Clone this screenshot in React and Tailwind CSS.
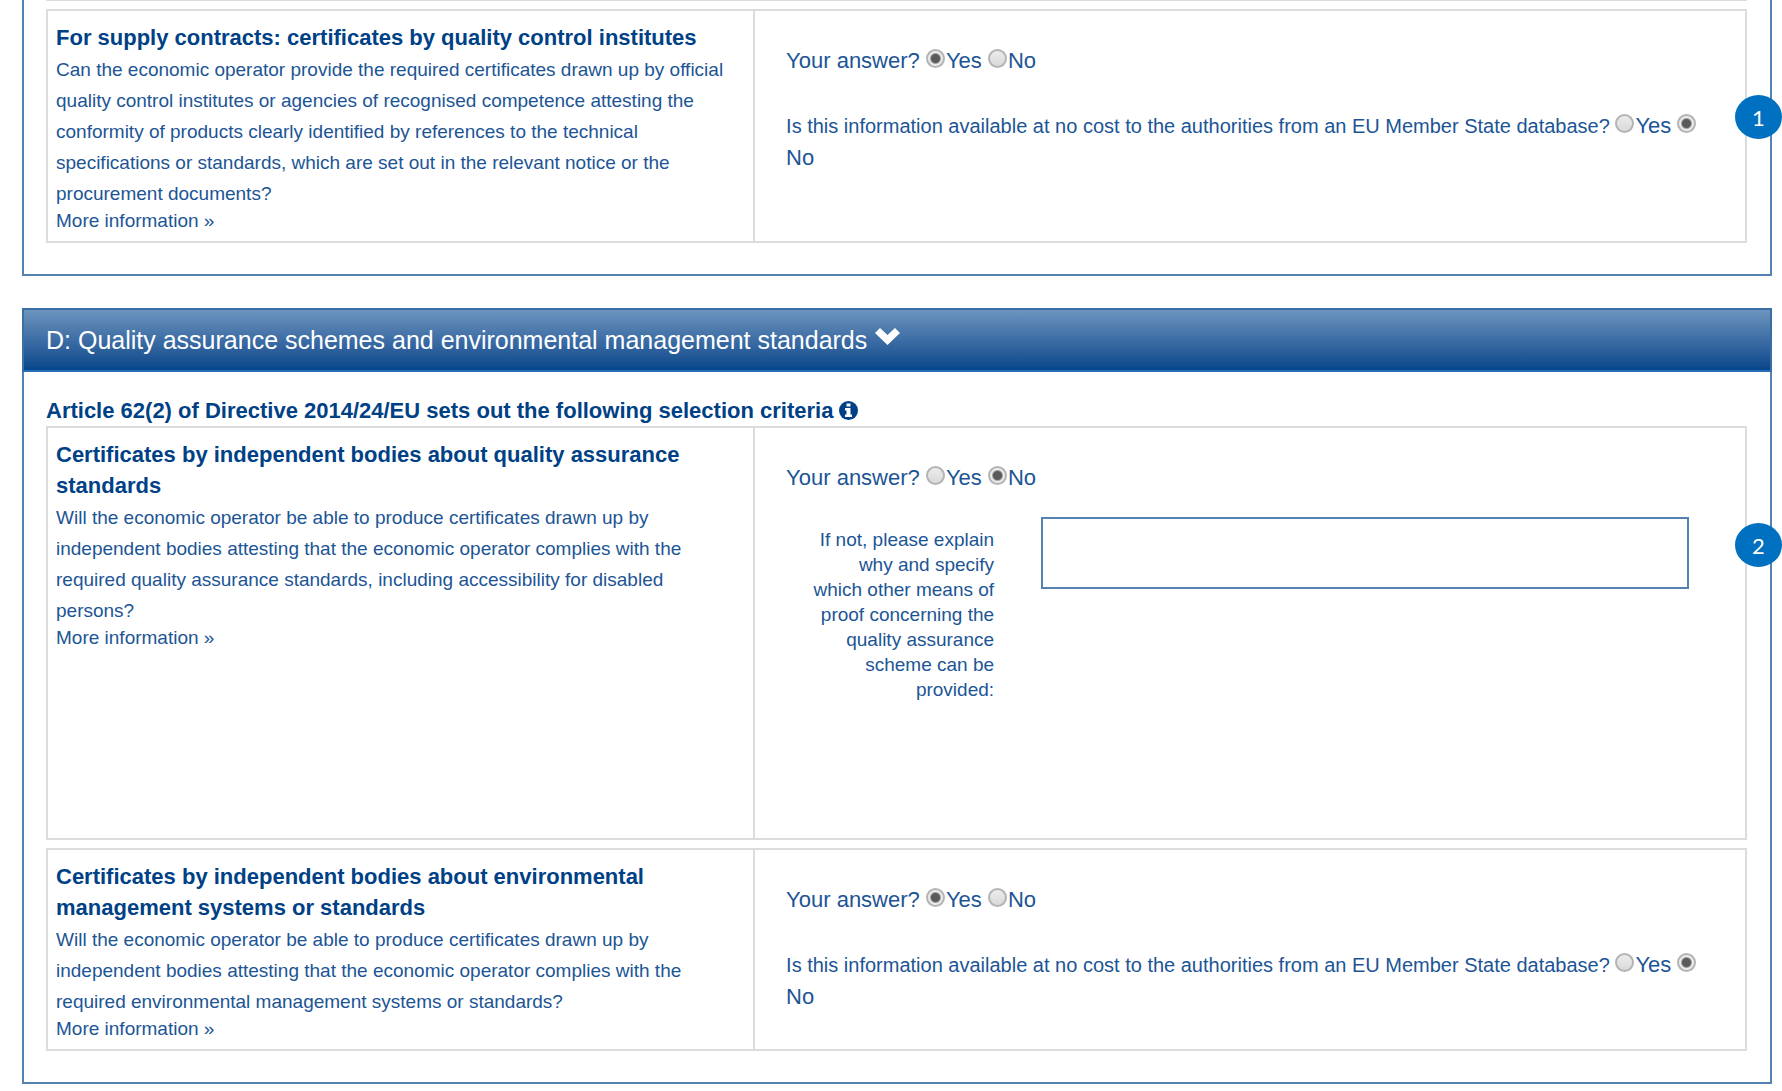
import React from "react";

function Radio({ name, label, checked }) {
  return (
    <label className="text-[22px]/[31px]">
      <input
        type="radio"
        name={name}
        value={label}
        defaultChecked={checked}
        className="mr-px inline-block size-[19px] appearance-none rounded-full border-2 border-[#b4b4b4] bg-linear-to-b from-[#ececec] to-[#d9d9d9] checked:bg-[radial-gradient(circle,#5a5a5a_0_4px,#ececec_6px)]"
      />
      {label}
    </label>
  );
}

function Question({ text, name, value, className }) {
  return (
    <fieldset className={className}>
      {text} <Radio name={name} label="Yes" checked={value === "Yes"} />{" "}
      <Radio name={name} label="No" checked={value === "No"} />
    </fieldset>
  );
}

function AnswerQuestion({ name, value }) {
  return <Question text="Your answer?" name={name} value={value} className="text-[22px]/[31px]" />;
}

function DatabaseQuestion({ name, value }) {
  return (
    <Question
      text="Is this information available at no cost to the authorities from an EU Member State database?"
      name={name}
      value={value}
      className="text-xl/[31px]"
    />
  );
}

function Badge({ children, className }) {
  return (
    <span
      className={
        "absolute -right-[37px] flex h-11 w-[47px] items-center justify-center rounded-[50%] bg-[#0070c0] font-[Lato,sans-serif] text-[22px] text-white " +
        className
      }
    >
      {children}
    </span>
  );
}

function Criterion({ title, text, children, className = "" }) {
  return (
    <section className={"relative grid grid-cols-12 border-2 border-[#dcdcdc] " + className}>
      <div className="col-span-5 border-r-2 border-[#dcdcdc] pt-[11px] pr-5 pb-2 pl-2">
        <h3 className="mb-px text-[22px]/[31px] font-bold text-[#004186]">{title}</h3>
        <p className="text-[19px]/[31px]">{text}</p>
        <a href="#more" className="block text-[19px]/6">
          More information »
        </a>
      </div>
      <div className="col-span-7 flex flex-col gap-[34px] pt-[34px] pr-8 pl-[31px]">{children}</div>
    </section>
  );
}

export default function App() {
  return (
    <main className="bg-white pr-[10px] pb-2 pl-[22px] font-['Liberation_Sans',Arial,sans-serif] text-[#1c5595]">
      <div className="border-2 border-t-0 border-[#5583b1] pr-[23px] pb-[31px] pl-[22px]">
        <div className="mb-2 h-px bg-[#dcdcdc]" />
        <Criterion
          title="For supply contracts: certificates by quality control institutes"
          text="Can the economic operator provide the required certificates drawn up by official quality control institutes or agencies of recognised competence attesting the conformity of products clearly identified by references to the technical specifications or standards, which are set out in the relevant notice or the procurement documents?"
        >
          <AnswerQuestion name="supply" value="Yes" />
          <DatabaseQuestion name="supply-db" value="No" />
          <Badge className="top-[84px]">1</Badge>
        </Criterion>
      </div>

      <div className="mt-8 border-2 border-[#5583b1] pb-[31px]">
        <h2 className="-mx-0.5 -mt-0.5 border-2 border-[#3a6fa5] border-b-[#2a6fb8] bg-linear-to-b from-[#6c94be] to-[#04468a] px-[22px] py-[15px] text-[25px]/[30px] text-white">
          <button type="button" className="flex items-center gap-2">
            D: Quality assurance schemes and environmental management standards
            <svg viewBox="0 0 25 17" className="mb-2 h-[17px] w-[25px]" fill="currentColor" aria-hidden="true">
              <path d="M0 5 5 0l7.500 7L20 0l5 5-12.500 12z" />
            </svg>
          </button>
        </h2>
        <div className="pt-[23px] pr-[23px] pl-[22px]">
          <h3 className="flex items-center gap-1.5 text-[22px]/[31px] font-bold text-[#004186]">
            Article 62(2) of Directive 2014/24/EU sets out the following selection criteria
            <svg viewBox="0 0 19 19" className="size-[19px]" aria-hidden="true">
              <circle cx="9.500" cy="9.500" r="9.500" fill="#004186" />
              <path d="M7.500 2.500h4v3h-4zM6 7h5.500v6.500H13V16H6v-2.500h1.500v-4H6z" fill="#fff" />
            </svg>
          </h3>
          <Criterion
            className="min-h-[414px]"
            title="Certificates by independent bodies about quality assurance standards"
            text="Will the economic operator be able to produce certificates drawn up by independent bodies attesting that the economic operator complies with the required quality assurance standards, including accessibility for disabled persons?"
          >
            <AnswerQuestion name="quality" value="No" />
            <div className="-mt-[10px] grid grid-cols-[208px_1fr] items-start gap-[47px] pr-6">
              <label htmlFor="explain" className="pt-[10px] pl-6 text-right text-[19px]/[25px]">
                If not, please explain why and specify which other means of proof concerning the quality assurance
                scheme can be provided:
              </label>
              <textarea id="explain" className="block h-[72px] w-full resize-none border-2 border-[#5583b1] bg-white p-2 text-lg" />
            </div>
            <Badge className="top-[95px]">2</Badge>
          </Criterion>
          <Criterion
            className="mt-2"
            title="Certificates by independent bodies about environmental management systems or standards"
            text="Will the economic operator be able to produce certificates drawn up by independent bodies attesting that the economic operator complies with the required environmental management systems or standards?"
          >
            <AnswerQuestion name="environment" value="Yes" />
            <DatabaseQuestion name="environment-db" value="No" />
          </Criterion>
        </div>
      </div>
    </main>
  );
}
